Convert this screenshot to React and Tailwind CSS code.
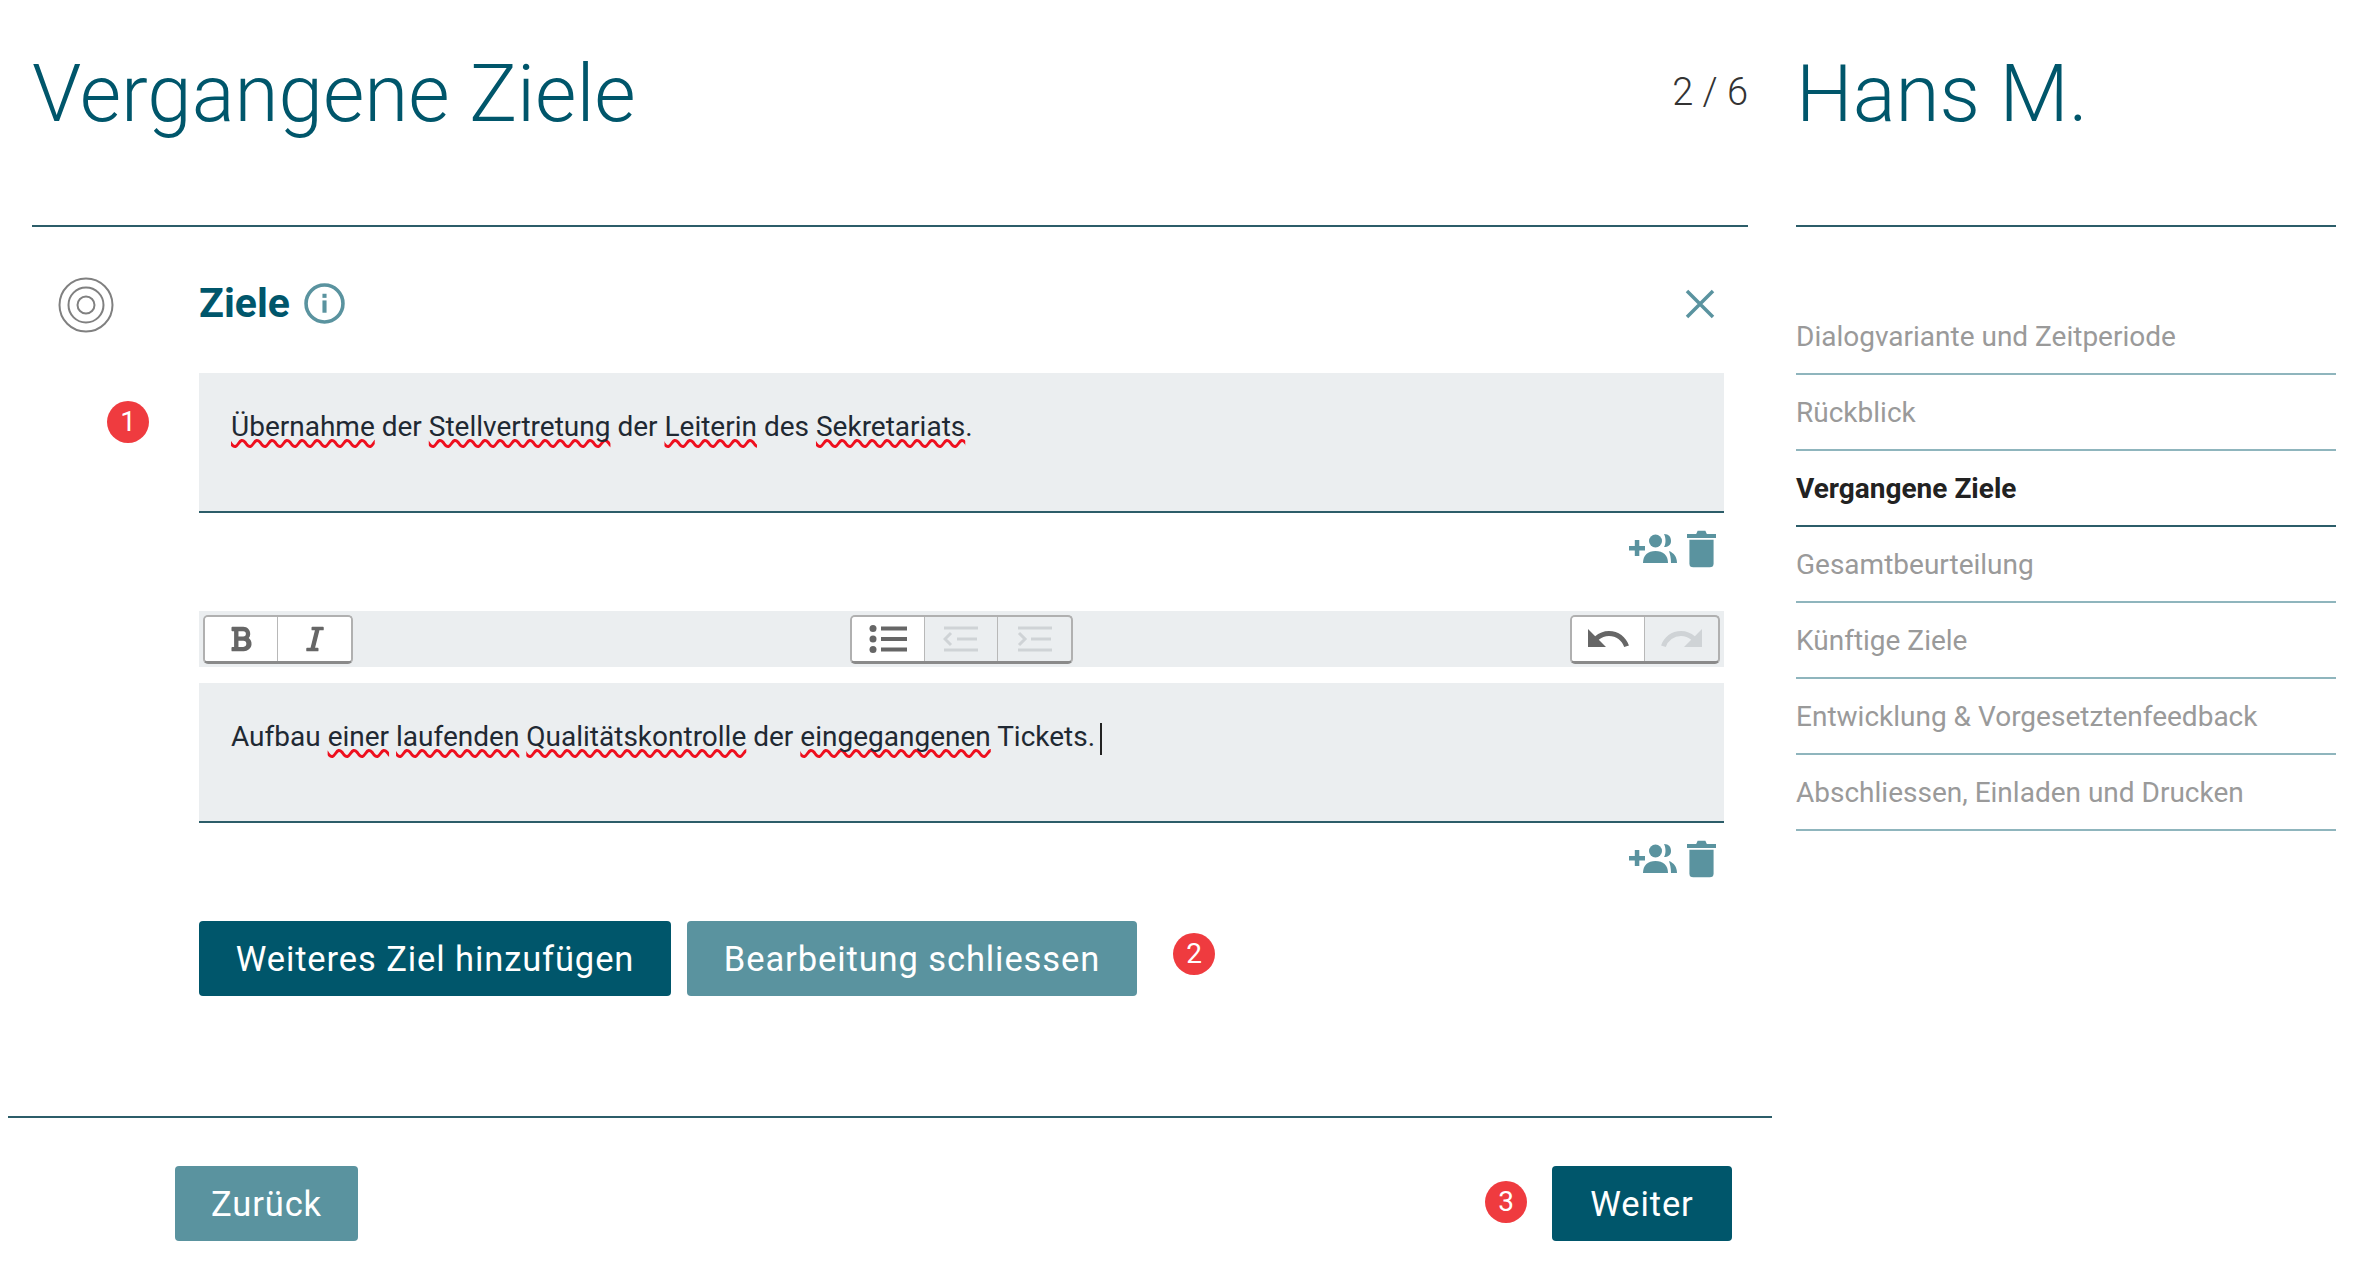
import { FaBold, FaItalic } from 'react-icons/fa';
import { MdUndo, MdRedo } from 'react-icons/md';

const nav = [
  'Dialogvariante und Zeitperiode',
  'Rückblick',
  'Vergangene Ziele',
  'Gesamtbeurteilung',
  'Künftige Ziele',
  'Entwicklung & Vorgesetztenfeedback',
  'Abschliessen, Einladen und Drucken',
];

function Badge({ n, className = '' }) {
  return (
    <div className={`w-[42px] h-[42px] rounded-full bg-[#ef3b3f] text-white flex items-center justify-center text-[28px] leading-none ${className}`}>
      {n}
    </div>
  );
}

function Wavy({ children }) {
  return <span className="underline decoration-wavy decoration-[#ee0f1e] decoration-[3px] underline-offset-[3px] [text-decoration-skip-ink:none]">{children}</span>;
}

function RowIcons() {
  return (
    <div className="h-[65px] pt-[6px] flex items-center justify-end pr-[8px] gap-[8px] text-[#5a939f]">
      {/* add person */}
      <svg width="50" height="32" viewBox="0 0 50 32" fill="currentColor">
        <rect x="0" y="13" width="16" height="4.5" />
        <rect x="5.8" y="7" width="4.5" height="16" />
        <circle cx="26.5" cy="8" r="6.5" />
        <path d="M14 30c0-8 5-12 12.5-12S39 22 39 30z" />
        <path d="M35 1c5 0 7 3 7 7s-3 6-7 6c2-3 2-9 0-13z" />
        <path d="M40 18c5 2 8 6 8 12h-6c0-5-1-9-2-12z" />
      </svg>
      <svg width="29" height="38" viewBox="0 0 30 38" fill="currentColor">
        <path d="M0 3.5h9.5L11 0h8l1.5 3.5H30v4H0z" />
        <path d="M2.5 9.5h25V34a4 4 0 0 1-4 4h-17a4 4 0 0 1-4-4z" />
      </svg>
    </div>
  );
}

function ListIcon() {
  return (
    <svg width="38" height="28" viewBox="0 0 38 28" fill="#666">
      <circle cx="4" cy="3.5" r="3.5" />
      <circle cx="4" cy="14" r="3.5" />
      <circle cx="4" cy="24.5" r="3.5" />
      <rect x="12" y="1.5" width="26" height="4" />
      <rect x="12" y="12" width="26" height="4" />
      <rect x="12" y="22.5" width="26" height="4" />
    </svg>
  );
}

function IndentIcon({ dir }) {
  return (
    <svg width="36" height="26" viewBox="0 0 36 26" stroke="#cfd3d6" strokeWidth="3" fill="none">
      <path d="M1 2h34M1 24h34M14 13h20" />
      {dir === 'out' ? <path d="M8 7l-6 6 6 6" /> : <path d="M2 7l6 6-6 6" />}
    </svg>
  );
}

function ToolGroup({ children }) {
  return (
    <div className="flex h-[49px] rounded-[5px] border-2 border-[#b0b0b0] border-b-[3px] border-b-[#8a8a8a] overflow-hidden">
      {children}
    </div>
  );
}

function Tool({ on, children }) {
  return (
    <div className={`w-[73px] flex items-center justify-center border-r border-[#b8b8b8] last:border-r-0 ${on ? 'bg-white text-[#666]' : 'text-[#cfd3d6]'}`}>
      {children}
    </div>
  );
}

export default function App() {
  return (
    <div className="h-[1271px] flex bg-white font-['Roboto',sans-serif] text-[#1f2933] overflow-hidden">
      {/* Main column */}
      <div className="w-[1764px] ml-[8px] shrink-0 flex flex-col">
        <div className="mx-[24px] h-[227px] border-b-2 border-[#2c5d69] flex justify-between">
          <h1 className="font-light text-[80px] leading-none text-[#00566b] mt-[54px]">Vergangene Ziele</h1>
          <div className="text-[38px] font-light leading-none mt-[73px] text-[#333]">2 / 6</div>
        </div>

        <div className="flex h-[891px] border-b-2 border-[#2c5d69] pl-[24px]">
          {/* left gutter */}
          <div className="w-[167px] shrink-0 flex flex-col">
            <svg className="mt-[50px] ml-[26px]" width="56" height="56" viewBox="0 0 56 56" fill="none" stroke="#808080" strokeWidth="2">
              <circle cx="28" cy="28" r="26.5" />
              <circle cx="28" cy="28" r="17.5" />
              <circle cx="28" cy="28" r="8.5" />
            </svg>
            <Badge n="1" className="mt-[68px] ml-[75px]" />
          </div>

          {/* form */}
          <div className="w-[1525px]">
            <div className="h-[146px] flex items-start justify-between">
              <div className="flex items-center mt-[50px] gap-[14px]">
                <span className="font-bold text-[41px] leading-[52px] text-[#00566b]">Ziele</span>
                <svg width="41" height="41" viewBox="0 0 40 40" fill="none">
                  <circle cx="20" cy="20" r="18" stroke="#5a939f" strokeWidth="3.5" />
                  <rect x="18" y="17" width="4" height="12" fill="#5a939f" />
                  <rect x="18" y="10.5" width="4" height="4" fill="#5a939f" />
                </svg>
              </div>
              <svg className="mt-[62px] mr-[9px]" width="30" height="30" viewBox="0 0 30 30" stroke="#5a939f" strokeWidth="3.5">
                <path d="M2 2l26 26M28 2L2 28" />
              </svg>
            </div>

            <div className="h-[140px] bg-[#ebeef0] border-b-2 border-[#2c5d69] pl-[32px] pt-[36px] text-[28px] leading-[36px]">
              <Wavy>Übernahme</Wavy> der <Wavy>Stellvertretung</Wavy> der <Wavy>Leiterin</Wavy> des <Wavy>Sekretariats</Wavy>.
            </div>
            <RowIcons />
            <div className="h-[56px] mt-[33px] bg-[#ebeef0] flex items-center justify-between px-[4px]">
              <ToolGroup>
                <Tool on><FaBold className="w-[24px] h-[28px]" /></Tool>
                <Tool on><FaItalic className="w-[26px] h-[28px]" /></Tool>
              </ToolGroup>
              <ToolGroup>
                <Tool on><ListIcon /></Tool>
                <Tool><IndentIcon dir="out" /></Tool>
                <Tool><IndentIcon dir="in" /></Tool>
              </ToolGroup>
              <ToolGroup>
                <Tool on><MdUndo className="w-[48px] h-[48px]" /></Tool>
                <Tool><MdRedo className="w-[48px] h-[48px]" /></Tool>
              </ToolGroup>
            </div>
            <div className="h-[140px] mt-[16px] bg-[#ebeef0] border-b-2 border-[#2c5d69] pl-[32px] pt-[36px] text-[28px] leading-[36px]">
              Aufbau <Wavy>einer</Wavy> <Wavy>laufenden</Wavy> <Wavy>Qualitätskontrolle</Wavy> der <Wavy>eingegangenen</Wavy> Tickets.
              <span className="inline-block w-[2px] h-[32px] bg-[#222] ml-[5px] align-middle" />
            </div>
            <RowIcons />
            <div className="mt-[33px] flex items-center">
              <button className="h-[75px] w-[472px] pt-[2px] rounded-[4px] bg-[#00566b] text-white text-[34.5px] tracking-[0.9px]">Weiteres Ziel hinzufügen</button>
              <button className="h-[75px] w-[450px] pt-[2px] ml-[16px] rounded-[4px] bg-[#5a939f] text-white text-[34.5px] tracking-[0.9px]">Bearbeitung schliessen</button>
              <Badge n="2" className="ml-[36px] -mt-[9px]" />
            </div>
          </div>
        </div>

        {/* Footer */}
        <div className="flex items-center justify-between pl-[167px] pr-[40px] pt-[48px]">
          <button className="h-[75px] w-[183px] pt-[2px] rounded-[4px] bg-[#5a939f] text-white text-[34.5px] tracking-[0.9px]">Zurück</button>
          <div className="flex items-center gap-[25px]">
            <Badge n="3" className="-mt-[3px]" />
            <button className="h-[75px] w-[180px] pt-[2px] rounded-[4px] bg-[#00566b] text-white text-[34.5px] tracking-[0.9px]">Weiter</button>
          </div>
        </div>
      </div>

      {/* Sidebar */}
      <div className="w-[540px] ml-[24px] shrink-0">
        <div className="h-[227px] border-b-2 border-[#2c5d69] flex">
          <div className="font-light text-[80px] leading-none text-[#00566b] mt-[54px]">Hans M.</div>
        </div>
        <ul className="mt-[72px]">
          {nav.map((item) => (
            <li
              key={item}
              className={`h-[76px] flex items-center pt-[1px] border-b-2 text-[28px] ${item === 'Vergangene Ziele' ? 'font-bold text-[#222] border-[#2c5d69]' : 'text-[#9a9a9a] border-[#8fb5bd]'}`}
            >
              {item}
            </li>
          ))}
        </ul>
      </div>
    </div>
  );
}
